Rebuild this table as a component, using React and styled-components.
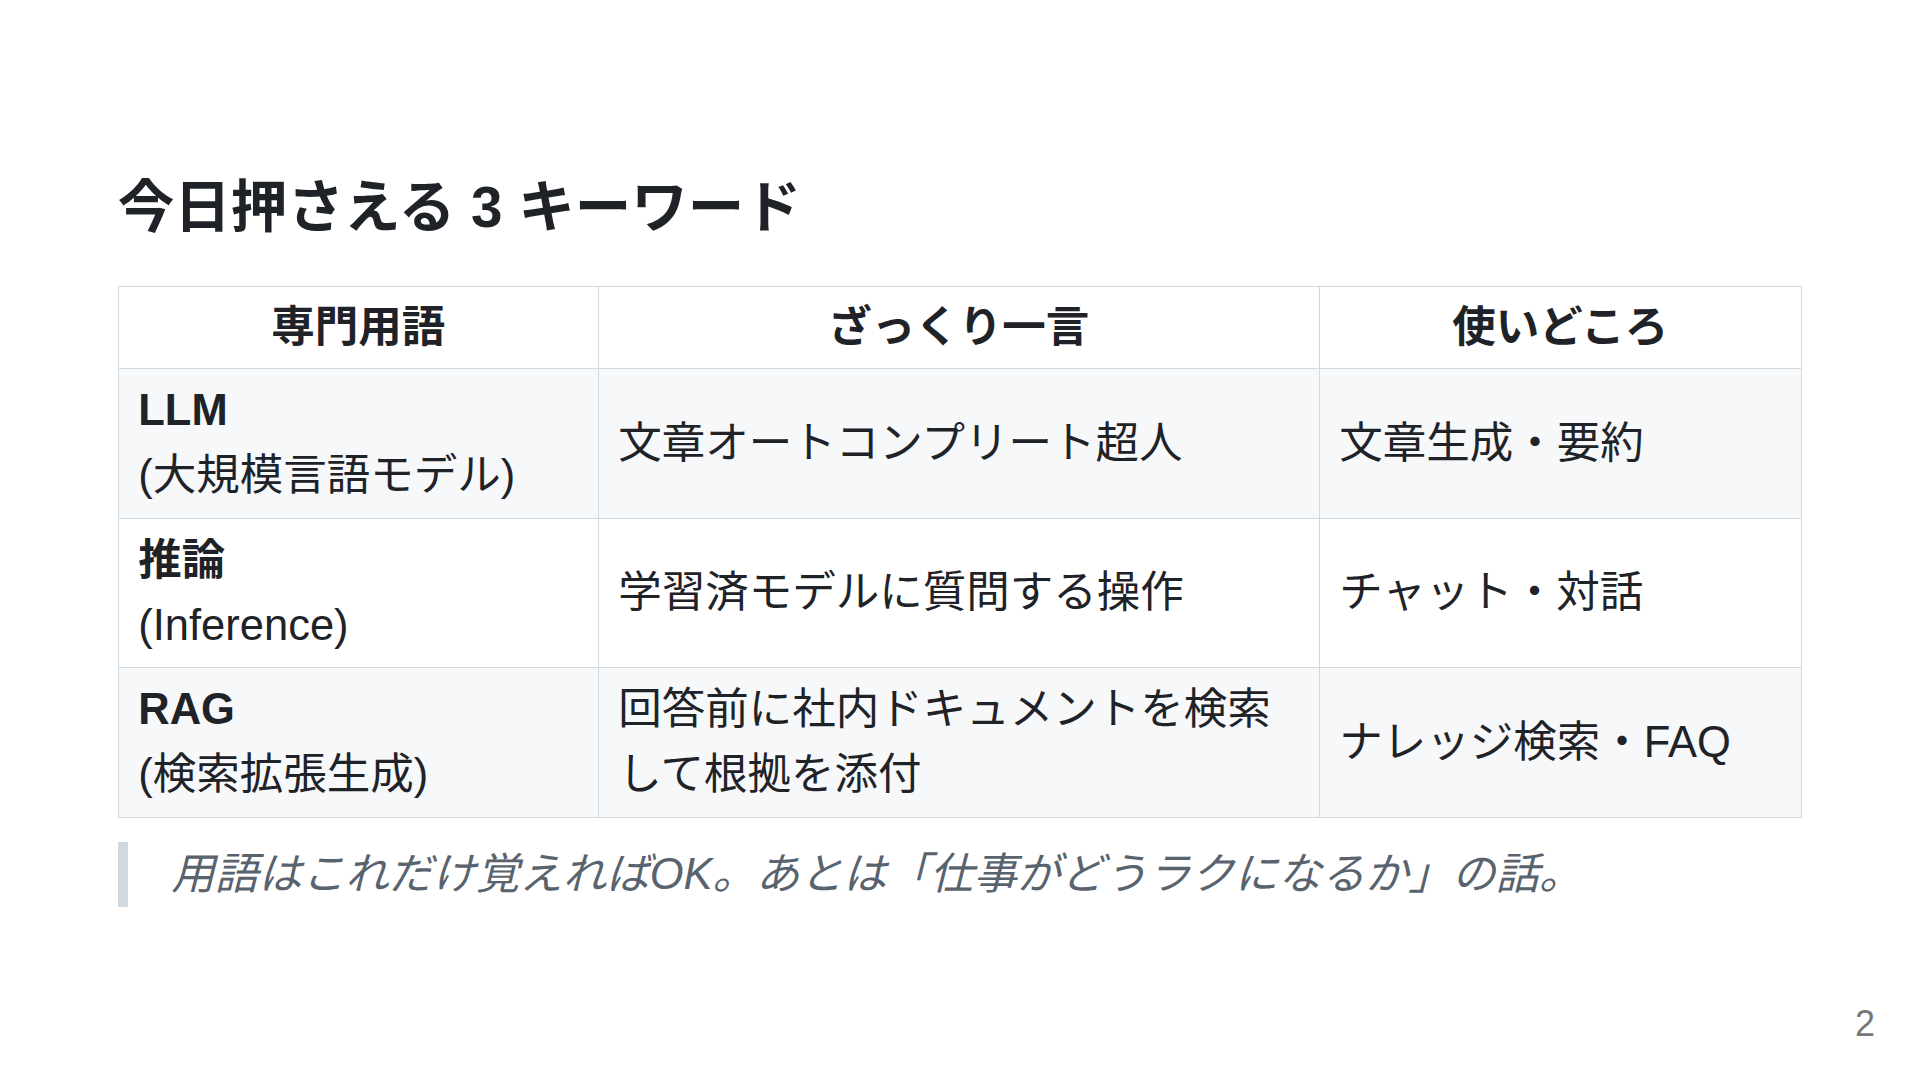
import React from "react";
import styled, { createGlobalStyle } from "styled-components";

const GlobalStyle = createGlobalStyle`
  html, body {
    margin: 0;
    padding: 0;
    background: #fff;
  }
`;

const Slide = styled.section`
  position: relative;
  width: 1920px;
  height: 1080px;
  box-sizing: border-box;
  padding: 0 117.75px;
  display: flex;
  flex-direction: column;
  justify-content: center;
  background: #fff;
  color: #1f2328;
  font-family: "Liberation Sans", "Noto Sans CJK JP", sans-serif;
  font-size: 43.5px;
  line-height: 1.5;
`;

const Title = styled.h3`
  margin: 0 0 42px;
  font-size: 56.55px;
  line-height: 1.25;
  font-weight: 700;
  color: #1f2328;
`;

const Table = styled.table`
  border-collapse: collapse;
  table-layout: fixed;
  width: 1683px;
`;

const Row = styled.tr`
  background: ${(p) => (p.$shaded ? "#f6f8fa" : "#fff")};
`;

const Head = styled.th`
  padding: 8px 19.5px;
  border: 1.5px solid #d1d9e0;
  font-weight: 700;
  text-align: center;
`;

const Cell = styled.td`
  padding: 9px 19.5px;
  border: 1.5px solid #d1d9e0;
  vertical-align: middle;
  text-align: left;
`;

const Term = styled.strong`
  font-weight: 700;
`;

const Quote = styled.blockquote`
  margin: 24px 0 0;
  padding: 0 1em;
  border-left: 0.25em solid #d1d9e0;
  color: #59636e;
  font-style: italic;
`;

const PageNo = styled.div`
  position: absolute;
  right: 45px;
  bottom: 38px;
  font-size: 36px;
  line-height: 1;
  color: #777;
`;

const rows = [
  {
    term: "LLM",
    sub: "(大規模言語モデル)",
    desc: "文章オートコンプリート超人",
    use: "文章生成・要約",
  },
  {
    term: "推論",
    sub: "(Inference)",
    desc: "学習済モデルに質問する操作",
    use: "チャット・対話",
  },
  {
    term: "RAG",
    sub: "(検索拡張生成)",
    desc: "回答前に社内ドキュメントを検索して根拠を添付",
    use: "ナレッジ検索・FAQ",
  },
];

export default function App() {
  return (
    <>
      <GlobalStyle />
      <Slide>
        <Title>今日押さえる 3 キーワード</Title>
        <Table>
          <colgroup>
            <col style={{ width: "480px" }} />
            <col style={{ width: "721px" }} />
            <col style={{ width: "482px" }} />
          </colgroup>
          <thead>
            <Row>
              <Head>専門用語</Head>
              <Head>ざっくり一言</Head>
              <Head>使いどころ</Head>
            </Row>
          </thead>
          <tbody>
            {rows.map((r, i) => (
              <Row key={r.term} $shaded={i % 2 === 0}>
                <Cell>
                  <Term>{r.term}</Term>
                  <br />
                  {r.sub}
                </Cell>
                <Cell>{r.desc}</Cell>
                <Cell>{r.use}</Cell>
              </Row>
            ))}
          </tbody>
        </Table>
        <Quote>用語はこれだけ覚えればOK。あとは「仕事がどうラクになるか」の話。</Quote>
        <PageNo>2</PageNo>
      </Slide>
    </>
  );
}
